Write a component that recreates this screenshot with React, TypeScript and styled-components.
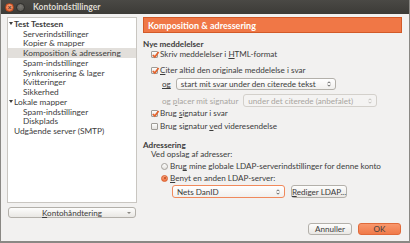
import React from "react";
import styled, { createGlobalStyle } from "styled-components";

const GlobalStyle = createGlobalStyle`
  html, body { margin: 0; padding: 0; background: #f2f1f0; }
  body {
    font-family: "Lato", "Liberation Sans", sans-serif;
    font-size: 8.1px;
    color: #3c3c3c;
  }
`;

const Window = styled.div`
  width: 410px;
  height: 243px;
  box-sizing: border-box;
  display: flex;
  flex-direction: column;
  background: #f2f1f0;
  border: 1px solid #8a8884;
  border-top: none;
  border-bottom-width: 2px;
  overflow: hidden;
`;

const TitleBar = styled.div`
  height: 14px;
  flex: none;
  display: flex;
  align-items: center;
  padding-left: 4px;
  gap: 2px;
  background: linear-gradient(#4a4945, #3c3b37);
`;

const WinButton = styled.span<{ $close?: boolean }>`
  width: 9px;
  height: 9px;
  box-sizing: border-box;
  border-radius: 50%;
  flex: none;
  display: flex;
  align-items: center;
  justify-content: center;
  font-size: 7px;
  line-height: 1;
  font-weight: bold;
  color: #3c3b37;
  border: 1px solid ${(p) => (p.$close ? "#b9451a" : "#2f2e2b")};
  background: ${(p) =>
    p.$close
      ? "radial-gradient(circle at 50% 35%, #f9a27a, #e8602b)"
      : "radial-gradient(circle at 50% 35%, #7a7873, #55544f)"};
`;

const Title = styled.span`
  margin-left: 6px;
  font-weight: bold;
  font-size: 8.5px;
  color: #dfdbd2;
`;

const Body = styled.div`
  flex: 1;
  display: grid;
  grid-template-columns: 130px 1fr;
  column-gap: 6px;
  padding: 3px 7px 5px 6px;
  min-height: 0;
`;

const LeftColumn = styled.div`
  display: flex;
  flex-direction: column;
`;

const Tree = styled.div`
  height: 186px;
  box-sizing: border-box;
  background: #fff;
  border: 1px solid #c9c6c1;
  padding-top: 1px;
`;

const TreeRow = styled.div<{ $indent: number; $selected?: boolean; $bold?: boolean }>`
  height: 9.75px;
  display: flex;
  align-items: center;
  padding-left: ${(p) => p.$indent}px;
  white-space: nowrap;
  font-size: 8.3px;
  font-weight: ${(p) => (p.$bold ? "bold" : "normal")};
  background: ${(p) => (p.$selected ? "#e2dfdb" : "transparent")};
`;

const Expander = styled.span`
  width: 0;
  height: 0;
  border-left: 2.5px solid transparent;
  border-right: 2.5px solid transparent;
  border-top: 3.5px solid #3c3c3c;
  margin-right: 1px;
`;

const Button = styled.div<{ $primary?: boolean; $width?: number; $height?: number }>`
  height: ${(p) => p.$height ?? 12}px;
  box-sizing: border-box;
  width: ${(p) => (p.$width ? `${p.$width}px` : "auto")};
  flex: none;
  display: flex;
  align-items: center;
  justify-content: center;
  border-radius: 3px;
  white-space: nowrap;
  color: #3c3c3c;
  border: 1px solid ${(p) => (p.$primary ? "#e06a3a" : "#b3b0aa")};
  background: ${(p) =>
    p.$primary
      ? "linear-gradient(#f8976c, #f07a49)"
      : "linear-gradient(#fdfdfc, #e9e7e4)"};
`;

const AccountButton = styled(Button)`
  margin: 4px 1px 0;
  position: relative;
`;

const EditButton = styled(Button)`
  margin-left: 6px;
`;

const DropArrow = styled.span`
  position: absolute;
  right: 4px;
  top: 4px;
  width: 0;
  height: 0;
  border-left: 2px solid transparent;
  border-right: 2px solid transparent;
  border-top: 2.5px solid #8a8782;
`;

const RightColumn = styled.div`
  display: flex;
  flex-direction: column;
`;

const Header = styled.div`
  height: 16px;
  flex: none;
  box-sizing: border-box;
  display: flex;
  align-items: center;
  padding-left: 4px;
  background: #f07746;
  border: 1px solid #d25a28;
  color: #fff;
  font-weight: bold;
  font-size: 9px;
`;

const Row = styled.div<{ $top: number; $height?: number; $indent?: number }>`
  margin-top: ${(p) => p.$top}px;
  height: ${(p) => p.$height ?? 10}px;
  flex: none;
  display: flex;
  align-items: center;
  padding-left: ${(p) => p.$indent ?? 0}px;
  white-space: nowrap;
`;

const SectionTitle = styled.span`
  font-weight: bold;
`;

const Muted = styled.span`
  color: #a8a59f;
`;

const Box = styled.span`
  width: 7px;
  height: 7px;
  box-sizing: border-box;
  border: 1px solid #9f9c97;
  border-radius: 1px;
  background: linear-gradient(#fdfdfc, #e4e2df);
  position: relative;
  flex: none;
  margin-right: 2px;
`;

const Tick = styled.svg`
  position: absolute;
  left: -1px;
  top: -2px;
`;

const Radio = styled.span<{ $checked?: boolean }>`
  width: 7px;
  height: 7px;
  box-sizing: border-box;
  border-radius: 50%;
  flex: none;
  margin-right: 2px;
  display: flex;
  align-items: center;
  justify-content: center;
  border: 1px solid ${(p) => (p.$checked ? "#d9602f" : "#a3a09b")};
  background: ${(p) =>
    p.$checked ? "linear-gradient(#f9a07a, #ef7443)" : "linear-gradient(#fdfdfc, #e4e2df)"};
`;

const RadioDot = styled.span`
  width: 2px;
  height: 2px;
  border-radius: 50%;
  background: #b84a1e;
`;

const Select = styled.div<{ $width: number; $height?: number; $disabled?: boolean; $focused?: boolean }>`
  width: ${(p) => p.$width}px;
  height: ${(p) => p.$height ?? 12}px;
  box-sizing: border-box;
  flex: none;
  display: flex;
  align-items: center;
  justify-content: space-between;
  padding: 0 4px;
  border-radius: 3px;
  color: ${(p) => (p.$disabled ? "#a8a59f" : "#3c3c3c")};
  border: 1px solid
    ${(p) => (p.$focused ? "#f0895c" : p.$disabled ? "#d3d0cb" : "#b3b0aa")};
  background: ${(p) =>
    p.$disabled ? "#f4f3f2" : "linear-gradient(#ffffff, #f1f0ee)"};
`;

const Label = styled.span`
  margin-right: 5px;
`;

const Actions = styled.div`
  margin-top: auto;
  display: flex;
  justify-content: flex-end;
  gap: 6px;
  padding-right: 1px;
  padding-bottom: 1px;
`;

const Check = ({ checked }: { checked?: boolean }) => (
  <Box>
    {checked && (
      <Tick width="9" height="9" viewBox="0 0 9 9">
        <path d="M1.8 5 L3.8 7 L7.6 2" fill="none" stroke="#e5622b" strokeWidth="1.7" />
      </Tick>
    )}
  </Box>
);

const Arrows = ({ color }: { color: string }) => (
  <svg width="4" height="6" viewBox="0 0 4 6">
    <path d="M0.5 2.3 L2 0.8 L3.5 2.3 M0.5 3.7 L2 5.2 L3.5 3.7" fill="none" stroke={color} strokeWidth="0.8" />
  </svg>
);

export default function App() {
  return (
    <>
      <GlobalStyle />
      <Window>
        <TitleBar>
          <WinButton $close>×</WinButton>
          <WinButton />
          <Title>Kontoindstillinger</Title>
        </TitleBar>
        <Body>
          <LeftColumn>
            <Tree>
              <TreeRow $indent={1} $bold>
                <Expander />
                Test Testesen
              </TreeRow>
              <TreeRow $indent={15}>Serverindstillinger</TreeRow>
              <TreeRow $indent={15}>Kopier &amp; mapper</TreeRow>
              <TreeRow $indent={15} $selected>
                Komposition &amp; adressering
              </TreeRow>
              <TreeRow $indent={15}>Spam-indstillinger</TreeRow>
              <TreeRow $indent={15}>Synkronisering &amp; lager</TreeRow>
              <TreeRow $indent={15}>Kvitteringer</TreeRow>
              <TreeRow $indent={15}>Sikkerhed</TreeRow>
              <TreeRow $indent={1}>
                <Expander />
                Lokale mapper
              </TreeRow>
              <TreeRow $indent={15}>Spam-indstillinger</TreeRow>
              <TreeRow $indent={15}>Diskplads</TreeRow>
              <TreeRow $indent={6}>Udgående server (SMTP)</TreeRow>
            </Tree>
            <AccountButton $height={11}>
              <span>
                <u>K</u>ontohåndtering
              </span>
              <DropArrow />
            </AccountButton>
          </LeftColumn>

          <RightColumn>
            <Header>Komposition &amp; adressering</Header>
            <Row $top={6}>
              <SectionTitle>Nye meddelelser</SectionTitle>
            </Row>
            <Row $top={0} $indent={8}>
              <Check checked />
              Skriv meddelelser i&nbsp;<u>H</u>TML-format
            </Row>
            <Row $top={6} $indent={8}>
              <Check checked />
              <u>C</u>iter altid den originale meddelelse i svar
            </Row>
            <Row $top={3} $height={12} $indent={19}>
              <Label>
                <u>og</u>
              </Label>
              <Select $width={160}>
                start mit svar under den citerede tekst
                <Arrows color="#3c3c3c" />
              </Select>
            </Row>
            <Row $top={4} $height={13} $indent={19}>
              <Label>
                <Muted>
                  og <u>p</u>lacer mit signatur
                </Muted>
              </Label>
              <Select $width={134} $height={13} $disabled>
                under det citerede (anbefalet)
                <Arrows color="#b5b2ad" />
              </Select>
            </Row>
            <Row $top={1} $indent={8}>
              <Check checked />
              Brug&nbsp;<u>s</u>ignatur i svar
            </Row>
            <Row $top={3} $indent={8}>
              <Check />
              Brug signatur&nbsp;<u>v</u>ed videresendelse
            </Row>

            <Row $top={9} $height={9}>
              <SectionTitle>Adressering</SectionTitle>
            </Row>
            <Row $top={0} $indent={8}>
              Ved opslag af adresser:
            </Row>
            <Row $top={2} $indent={18}>
              <Radio />
              Bru<u>g</u>&nbsp;mine globale LDAP-serverindstillinger for denne konto
            </Row>
            <Row $top={2} $indent={18}>
              <Radio $checked>
                <RadioDot />
              </Radio>
              <u>B</u>enyt en anden LDAP-server:
            </Row>
            <Row $top={2} $height={13} $indent={29}>
              <Select $width={113} $height={13} $focused>
                Nets DanID
                <Arrows color="#3c3c3c" />
              </Select>
              <EditButton $width={56} $height={13}>
                <span>
                  <u>R</u>ediger LDAP...
                </span>
              </EditButton>
            </Row>

            <Actions>
              <Button $width={44}>Annuller</Button>
              <Button $width={43} $primary>
                OK
              </Button>
            </Actions>
          </RightColumn>
        </Body>
      </Window>
    </>
  );
}
